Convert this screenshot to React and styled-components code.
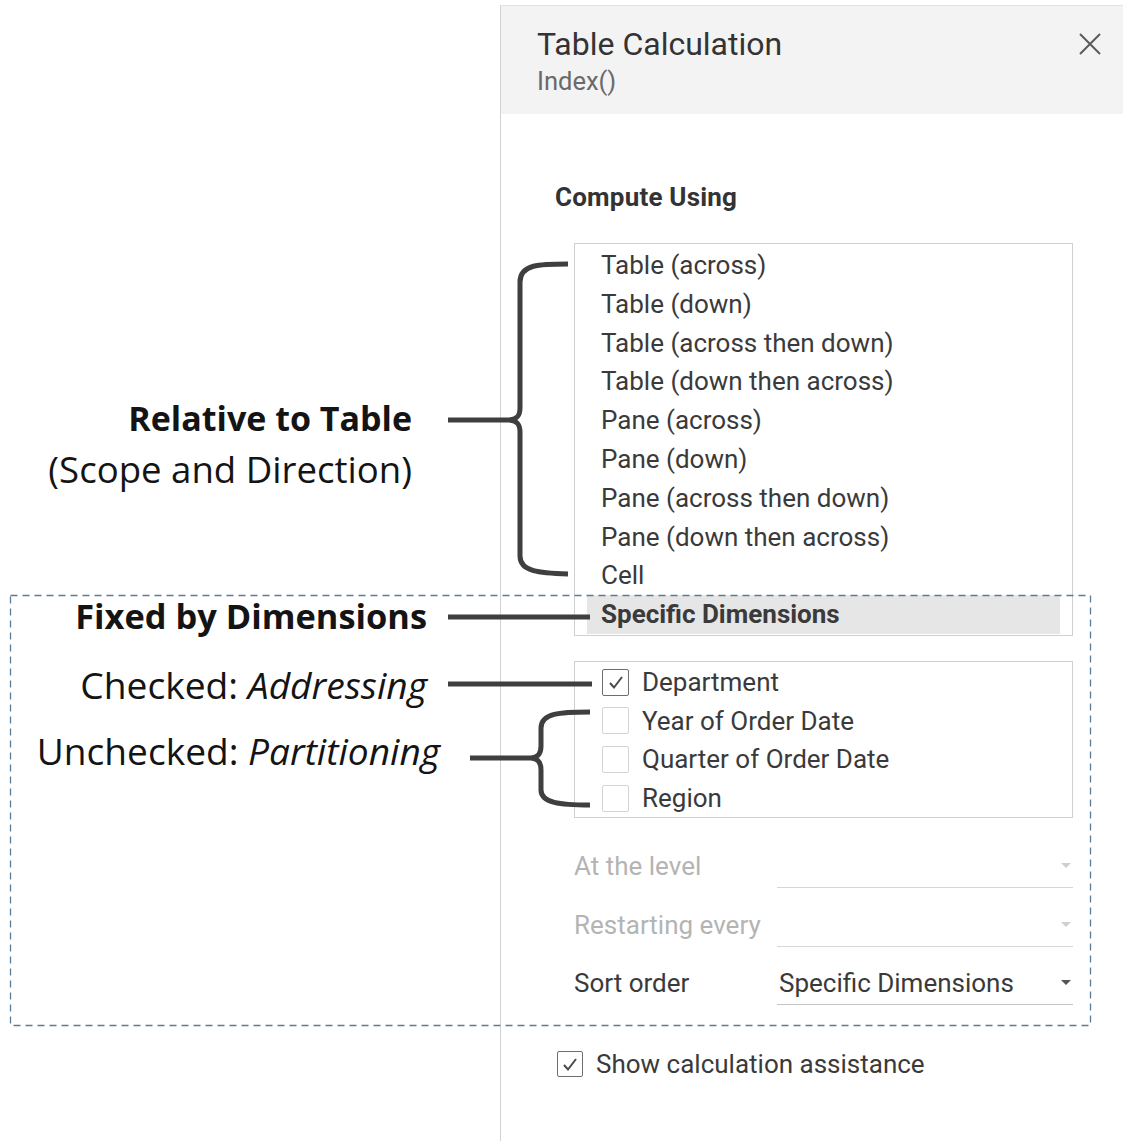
import React from "react";
import styled, { createGlobalStyle } from "styled-components";

const GlobalStyle = createGlobalStyle`
  html, body { margin: 0; padding: 0; background: #ffffff; }
  body { font-family: Roboto, "Liberation Sans", sans-serif; }
  * { box-sizing: border-box; }
`;

const Page = styled.div`
  position: relative;
  width: 1123px;
  height: 1141px;
  display: flex;
  overflow: hidden;
`;

const AnnotationColumn = styled.div`
  position: relative;
  width: 500px;
  flex: none;
`;

const Callout = styled.div`
  position: absolute;
  right: ${(p) => p.$right}px;
  top: ${(p) => p.$top}px;
  font-family: "Open Sans", "Noto Sans", sans-serif;
  font-size: ${(p) => p.$size}px;
  font-weight: ${(p) => (p.$bold ? 700 : 400)};
  line-height: 44px;
  color: #141414;
  white-space: nowrap;
  em { font-style: italic; }
`;

const Panel = styled.div`
  flex: 1;
  margin-top: 5px;
  border-left: 1px solid #d2d2d2;
  border-top: 1px solid #e2e2e2;
  display: flex;
  flex-direction: column;
`;

const Header = styled.div`
  height: 108px;
  background: #f3f3f3;
  display: flex;
  justify-content: space-between;
  align-items: flex-start;
  padding: 19px 22px 0 36px;
`;

const TitleBlock = styled.div`
  display: flex;
  flex-direction: column;
`;

const Title = styled.div`
  font-size: 32px;
  line-height: 38px;
  color: #333;
`;

const Subtitle = styled.div`
  font-size: 25.5px;
  line-height: 30px;
  color: #6a6a6a;
  margin-top: 3px;
`;

const CloseButton = styled.button`
  border: none;
  background: none;
  padding: 0;
  margin-top: 8px;
  width: 22px;
  height: 22px;
  display: flex;
  cursor: pointer;
`;

const Body = styled.div`
  padding: 0 50px 0 54px;
  display: flex;
  flex-direction: column;
`;

const SectionTitle = styled.div`
  margin-top: 68px;
  font-size: 26px;
  line-height: 30px;
  font-weight: 700;
  color: #333;
  letter-spacing: 0.2px;
`;

const ListBox = styled.div`
  margin: ${(p) => p.$mt}px 0 0 19px;
  border: 1px solid #d0d0d0;
  padding: ${(p) => p.$pad};
  display: flex;
  flex-direction: column;
`;

const ListItem = styled.div`
  height: 38.8px;
  line-height: 38.8px;
  padding-left: 14px;
  font-size: 26px;
  color: #3a3a3a;
  font-weight: ${(p) => (p.$selected ? 700 : 400)};
  background: ${(p) => (p.$selected ? "#e6e6e6" : "transparent")};
  white-space: nowrap;
`;

const CheckRow = styled.label`
  height: 38.6px;
  display: flex;
  align-items: center;
  gap: 13px;
  padding-left: 27px;
  font-size: 26px;
  color: #3a3a3a;
`;

const Box = styled.span`
  width: ${(p) => p.$size}px;
  height: ${(p) => p.$size}px;
  flex: none;
  border: ${(p) => (p.$checked ? "1.5px solid #6e6e6e" : "1px solid #d4d4d4")};
  border-radius: 2px;
  display: flex;
  align-items: center;
  justify-content: center;
  background: #fff;
`;

const Form = styled.div`
  margin: 26px 0 0 19px;
  display: flex;
  flex-direction: column;
  gap: 14.5px;
`;

const FormRow = styled.div`
  display: grid;
  grid-template-columns: 203px 1fr;
  height: 44px;
  align-items: stretch;
`;

const FieldLabel = styled.div`
  display: flex;
  align-items: center;
  font-size: 26px;
  color: ${(p) => (p.$disabled ? "#b4b4b4" : "#3a3a3a")};
  white-space: nowrap;
`;

const Select = styled.div`
  display: flex;
  align-items: center;
  justify-content: space-between;
  padding: 0 2px 0 2px;
  border-bottom: 1px solid ${(p) => (p.$disabled ? "#d6d6d6" : "#c4c4c4")};
  font-size: 26px;
  color: #3a3a3a;
  white-space: nowrap;
`;

const Caret = styled.span`
  width: 0;
  height: 0;
  border-left: 5px solid transparent;
  border-right: 5px solid transparent;
  border-top: 5px solid ${(p) => (p.$disabled ? "#cfcfcf" : "#555")};
`;

const AssistRow = styled(CheckRow)`
  margin-top: 45px;
  padding-left: 2px;
  height: 28px;
`;

const Overlay = styled.svg`
  position: absolute;
  left: 0;
  top: 0;
  pointer-events: none;
`;

const Check = () => (
  <svg width="16" height="15" viewBox="0 0 16 15">
    <path d="M2 8 L6 12.5 L14 2" fill="none" stroke="#4a4a4a" strokeWidth="2" />
  </svg>
);

const CheckBox = ({ checked, size = 27 }) => (
  <Box $checked={checked} $size={size}>
    {checked && <Check />}
  </Box>
);

const computeItems = [
  "Table (across)",
  "Table (down)",
  "Table (across then down)",
  "Table (down then across)",
  "Pane (across)",
  "Pane (down)",
  "Pane (across then down)",
  "Pane (down then across)",
  "Cell",
  "Specific Dimensions",
];

const dimensions = [
  { name: "Department", checked: true },
  { name: "Year of Order Date", checked: false },
  { name: "Quarter of Order Date", checked: false },
  { name: "Region", checked: false },
];

const fields = [
  { label: "At the level", value: "", disabled: true },
  { label: "Restarting every", value: "", disabled: true },
  { label: "Sort order", value: "Specific Dimensions", disabled: false },
];

const ink = "#3f3f3f";

export default function App() {
  return (
    <>
      <GlobalStyle />
      <Page>
        <AnnotationColumn>
          <Callout $right={88} $top={396} $size={34} $bold>
            Relative to Table
          </Callout>
          <Callout $right={88} $top={447} $size={36.6}>
            (Scope and Direction)
          </Callout>
          <Callout $right={73} $top={594} $size={34.4} $bold>
            Fixed by Dimensions
          </Callout>
          <Callout $right={73} $top={663} $size={37.2}>
            Checked: <em>Addressing</em>
          </Callout>
          <Callout $right={60} $top={729} $size={37.1}>
            Unchecked: <em>Partitioning</em>
          </Callout>
        </AnnotationColumn>

        <Panel>
          <Header>
            <TitleBlock>
              <Title>Table Calculation</Title>
              <Subtitle>Index()</Subtitle>
            </TitleBlock>
            <CloseButton aria-label="Close">
              <svg width="22" height="22" viewBox="0 0 22 22">
                <path d="M1 1 L21 21 M21 1 L1 21" stroke="#5a5a5a" strokeWidth="2" />
              </svg>
            </CloseButton>
          </Header>

          <Body>
            <SectionTitle>Compute Using</SectionTitle>
            <ListBox $mt={31} $pad="2px 12px 1px">
              {computeItems.map((item) => (
                <ListItem key={item} $selected={item === "Specific Dimensions"}>
                  {item}
                </ListItem>
              ))}
            </ListBox>

            <ListBox $mt={25} $pad="1px 0 0">
              {dimensions.map((d) => (
                <CheckRow key={d.name}>
                  <CheckBox checked={d.checked} />
                  {d.name}
                </CheckRow>
              ))}
            </ListBox>

            <Form>
              {fields.map((f) => (
                <FormRow key={f.label}>
                  <FieldLabel $disabled={f.disabled}>{f.label}</FieldLabel>
                  <Select $disabled={f.disabled}>
                    <span>{f.value}</span>
                    <Caret $disabled={f.disabled} />
                  </Select>
                </FormRow>
              ))}
            </Form>

            <AssistRow>
              <CheckBox checked size={26} />
              Show calculation assistance
            </AssistRow>
          </Body>
        </Panel>

        <Overlay width="1123" height="1141" viewBox="0 0 1123 1141">
          <rect
            x="10.5"
            y="595.5"
            width="1080"
            height="430"
            fill="none"
            stroke="#5b7c94"
            strokeWidth="1.3"
            strokeDasharray="7 5"
          />
          <g fill="none" stroke={ink} strokeWidth="5">
            <path d="M568 264 C540 264 520 264 520 282 L520 408 C520 416 517 419 510 420 C517 421 520 424 520 432 L520 556 C520 572 540 573 568 574" />
            <path d="M448 420 L512 420" />
            <path d="M448 617 L590 617" />
            <path d="M448 684 L592 684" />
            <path d="M590 712 C560 712 541 713 541 728 L541 746 C541 754 538 757 532 758 C538 759 541 762 541 770 L541 790 C541 803 560 805 590 805" />
            <path d="M470 758 L534 758" />
          </g>
        </Overlay>
      </Page>
    </>
  );
}
